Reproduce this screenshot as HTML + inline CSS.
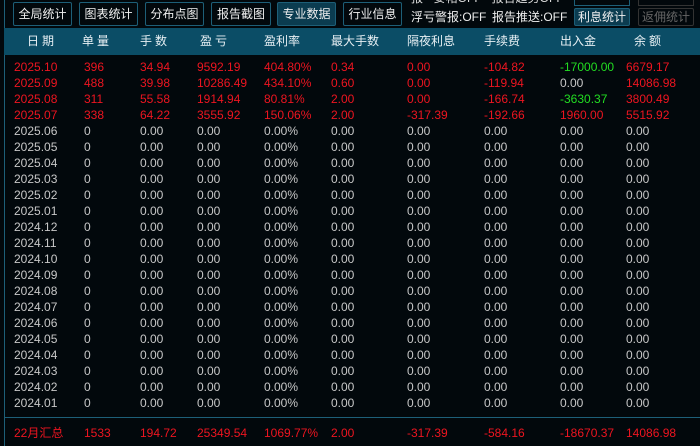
<!DOCTYPE html>
<html><head><meta charset="utf-8"><style>
body{margin:0;width:700px;height:446px;background:#02080c;overflow:hidden;position:relative;font-family:"Liberation Sans","Noto Sans CJK SC",sans-serif;font-size:12px;color:#c8c8c8}
.b{position:absolute;top:2px;height:22px;border:1px solid #1d5f78;border-radius:2px;color:#f0f0f0;font-size:12px;line-height:22px;text-align:center;background:#02080c}
.hd{position:absolute;left:4px;right:0;top:28px;height:27px;background:#0b4d66}
.h{position:absolute;top:28px;line-height:27px;color:#e8f0f4}
.r{position:absolute;left:0;height:16px;line-height:16px;width:700px}
.r span{position:absolute}
.R{color:#ee1520}.G{color:#22dd22}
</style></head><body>
<div style="position:absolute;left:4px;top:28px;bottom:0;width:1px;background:#1d5f78"></div>
<div style="position:absolute;left:0;top:0;width:4px;height:28px;border-right:1px solid #1d5f78"></div>
<div class="b" style="left:13px;width:57px">全局统计</div>
<div class="b" style="left:79px;width:57px">图表统计</div>
<div class="b" style="left:145px;width:57px">分布点图</div>
<div class="b" style="left:211px;width:58px">报告截图</div>
<div class="b" style="left:277px;width:57px;background:#0b3c50">专业数据</div>
<div class="b" style="left:343px;width:57px">行业信息</div>
<div style="position:absolute;left:411px;top:-9px;color:#ddd;line-height:14px">报 · 妥帖OFF &nbsp; 报告趋势OFF</div>
<div style="position:absolute;left:574px;top:-10px;width:54px;height:14px;border:1px solid #1d5f78"></div>
<div style="position:absolute;left:638px;top:-10px;width:54px;height:14px;border:1px solid #333"></div>
<div style="position:absolute;left:411px;top:9px;color:#eee;line-height:16px">浮亏警报:OFF</div>
<div style="position:absolute;left:492px;top:9px;color:#eee;line-height:16px">报告推送:OFF</div>
<div class="b" style="left:574px;top:8px;height:16px;line-height:16px;width:54px;background:#0b3c50">利息统计</div>
<div class="b" style="left:638px;top:8px;height:16px;line-height:16px;width:54px;color:#666;border-color:#333">返佣统计</div>
<div class="hd"></div>
<div class="h" style="left:27px;letter-spacing:3px">日期</div>
<div class="h" style="left:82px;letter-spacing:3px">单量</div>
<div class="h" style="left:140px;letter-spacing:3px">手数</div>
<div class="h" style="left:200px;letter-spacing:3px">盈亏</div>
<div class="h" style="left:264px">盈利率</div>
<div class="h" style="left:331px">最大手数</div>
<div class="h" style="left:407px">隔夜利息</div>
<div class="h" style="left:484px">手续费</div>
<div class="h" style="left:560px">出入金</div>
<div class="h" style="left:634px;letter-spacing:3px">余额</div>
<div id="rows"></div>
<div style="position:absolute;left:4px;right:0;top:417px;height:1px;background:#1d5f78"></div>
<div class="r R" style="top:425px"><span style="left:14px">22月汇总</span><span style="left:84px">1533</span><span style="left:140px">194.72</span><span style="left:197px">25349.54</span><span style="left:264px">1069.77%</span><span style="left:331px">2.00</span><span style="left:407px">-317.39</span><span style="left:484px">-584.16</span><span style="left:560px">-18670.37</span><span style="left:626px">14086.98</span></div>
<script>
(function(){
var xs=[14,84,140,197,264,331,407,484,560,626];
var d=[["2025.10","396","34.94","9592.19","404.80%","0.34","0.00","-104.82",["G","-17000.00"],"6679.17"],
["2025.09","488","39.98","10286.49","434.10%","0.60","0.00","-119.94",["W","0.00"],"14086.98"],
["2025.08","311","55.58","1914.94","80.81%","2.00","0.00","-166.74",["G","-3630.37"],"3800.49"],
["2025.07","338","64.22","3555.92","150.06%","2.00","-317.39","-192.66",["R","1960.00"],"5515.92"]];
var h="",y0=59;
for(var i=0;i<22;i++){
 var row,cls="";
 if(i<4){row=d[i];cls="R";}
 else{var yr=2025,m=10-i;if(m<1){yr=2024;m+=12;}row=[yr+"."+(m<10?"0":"")+m,"0","0.00","0.00","0.00%","0.00","0.00","0.00","0.00","0.00"];}
 h+='<div class="r '+cls+'" style="top:'+(y0+i*16)+'px">';
 for(var j=0;j<10;j++){var v=row[j],c="";if(typeof v!="string"){c=v[0];v=v[1];}h+='<span class="'+c+'" style="left:'+xs[j]+'px;'+(c=="W"?"color:#c8c8c8":"")+'">'+v+'</span>';}
 h+='</div>';
}
document.getElementById("rows").innerHTML=h;
})();
</script>
</body></html>
